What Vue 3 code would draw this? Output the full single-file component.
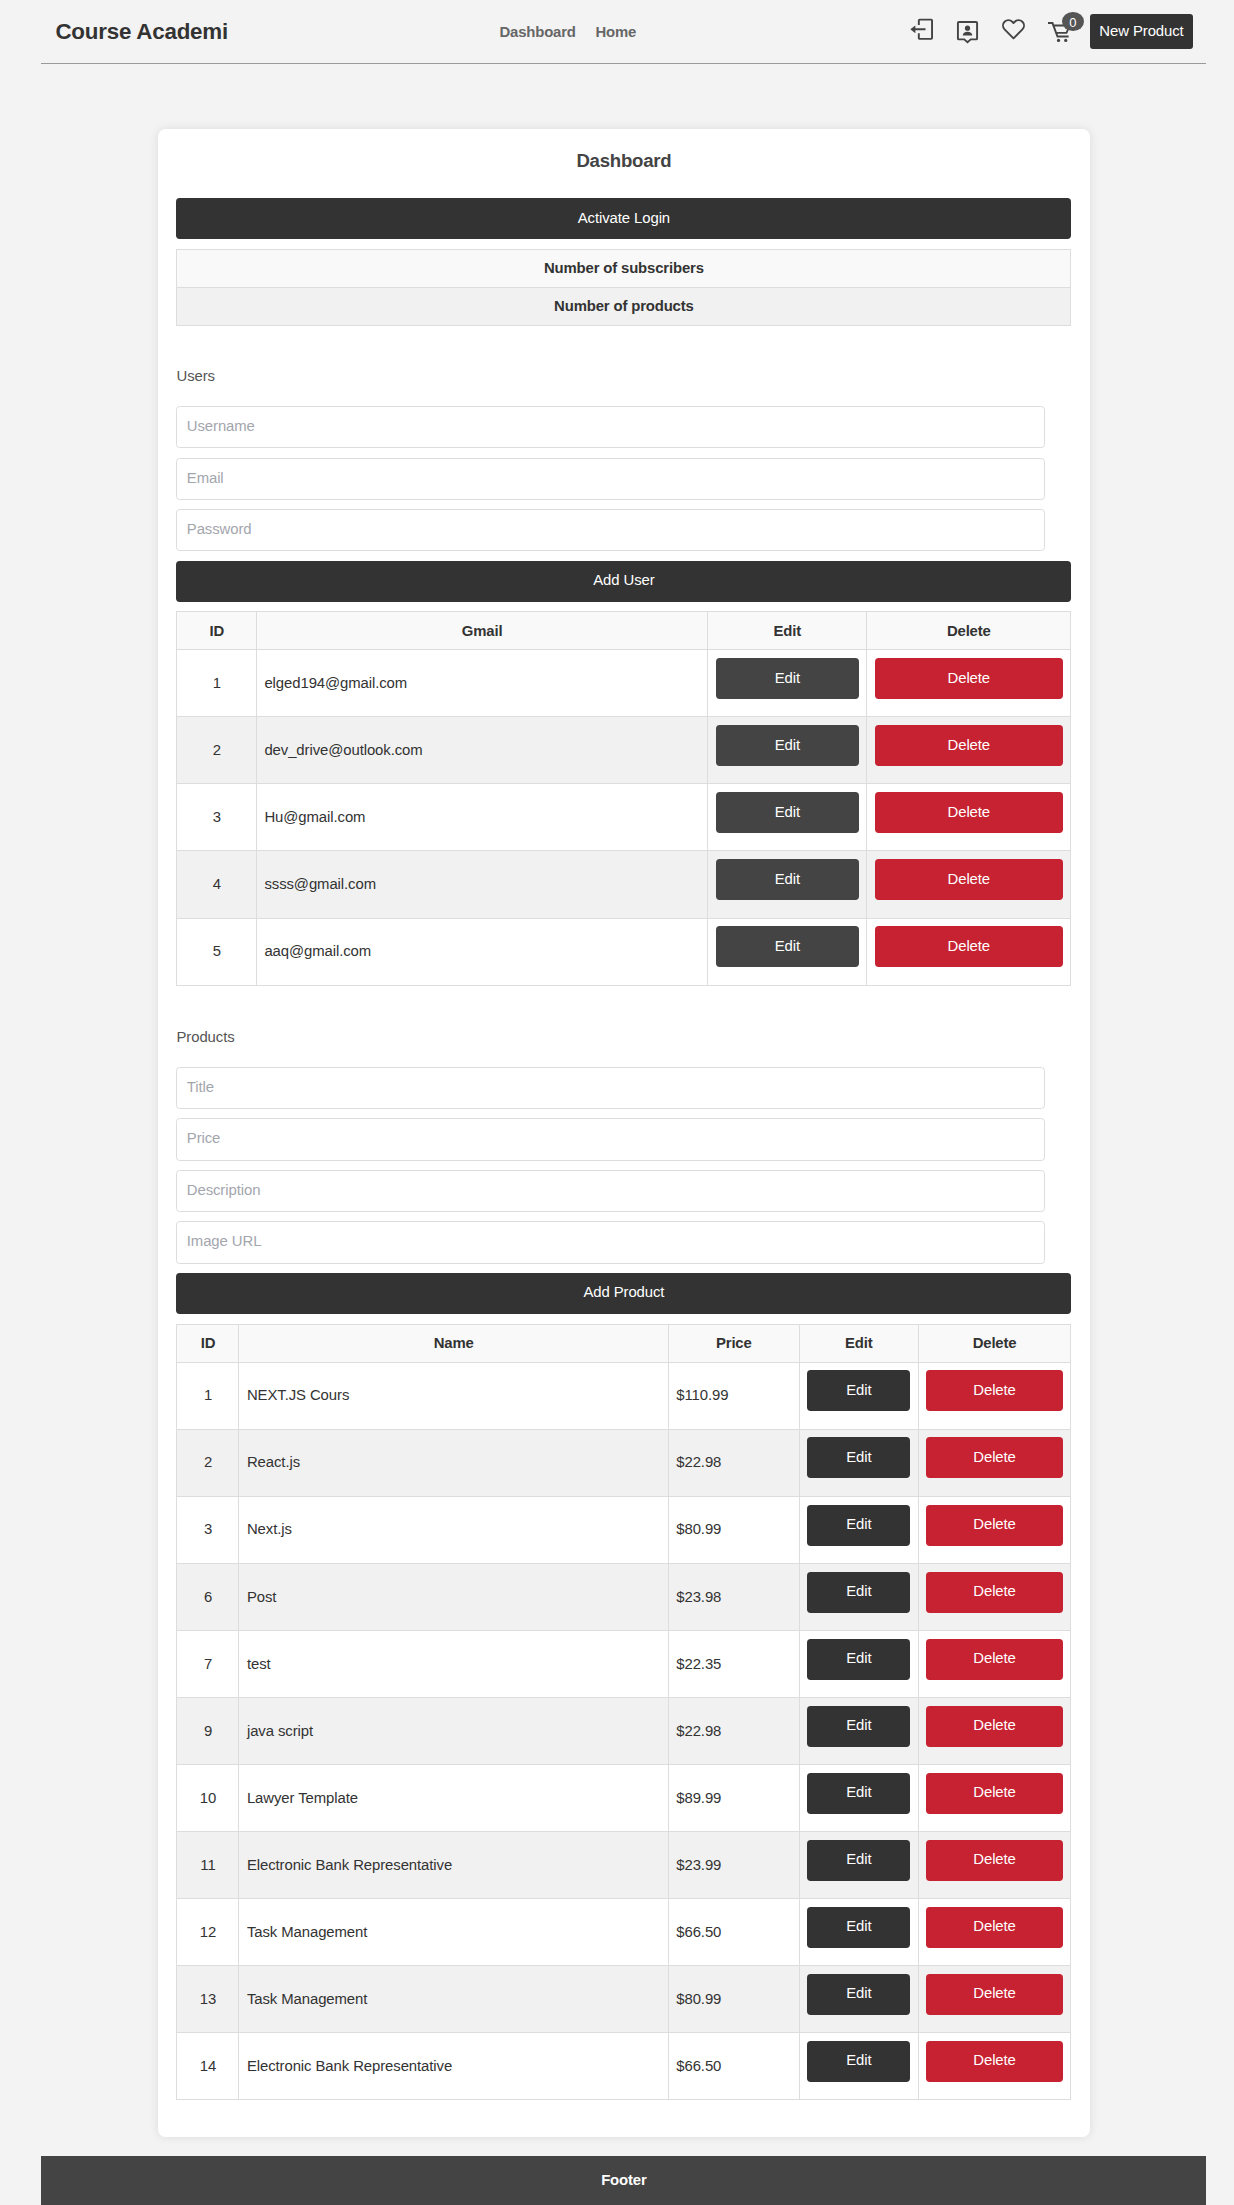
<script setup>
const userFields = ['Username', 'Email', 'Password']
const users = [
  { id: 1, email: 'elged194@gmail.com' },
  { id: 2, email: 'dev_drive@outlook.com' },
  { id: 3, email: 'Hu@gmail.com' },
  { id: 4, email: 'ssss@gmail.com' },
  { id: 5, email: 'aaq@gmail.com' },
]
const productFields = ['Title', 'Price', 'Description', 'Image URL']
const products = [
  { id: 1, name: 'NEXT.JS Cours', price: '$110.99' },
  { id: 2, name: 'React.js', price: '$22.98' },
  { id: 3, name: 'Next.js', price: '$80.99' },
  { id: 6, name: 'Post', price: '$23.98' },
  { id: 7, name: 'test', price: '$22.35' },
  { id: 9, name: 'java script', price: '$22.98' },
  { id: 10, name: 'Lawyer Template', price: '$89.99' },
  { id: 11, name: 'Electronic Bank Representative', price: '$23.99' },
  { id: 12, name: 'Task Management', price: '$66.50' },
  { id: 13, name: 'Task Management', price: '$80.99' },
  { id: 14, name: 'Electronic Bank Representative', price: '$66.50' },
]
</script>

<template>
  <div class="page">
    <header class="header">
      <h1 class="logo">Course Academi</h1>
      <nav class="nav">
        <a>Dashboard</a>
        <a>Home</a>
      </nav>
      <div class="actions">
        <svg class="icon exit" viewBox="0 0 24 24" fill="none" stroke="#444" stroke-width="2">
          <path d="M9.2 7.4V2.600a.9.9 0 0 1 .9-.9h12a.9.9 0 0 1 .9.9v18.300a.9.9 0 0 1-.9.9h-12a.9.9 0 0 1-.9-.9V16M4 11.800h12.200" />
          <path d="M.3 11.800 5.600 7.800v8z" fill="#444" stroke="none" />
        </svg>
        <svg class="icon contact" viewBox="0 0 24 24" fill="none" stroke="#444" stroke-width="2">
          <path d="M3 2h18a1 1 0 0 1 1 1v16.200a1 1 0 0 1-1 1h-5.600L12 23.200l-3.400-3H3a1 1 0 0 1-1-1V3a1 1 0 0 1 1-1z" />
          <circle cx="12" cy="8.500" r="2.700" fill="#444" stroke="none" />
          <path d="M7 16.200c0-2.600 2.200-4 5-4s5 1.400 5 4z" fill="#444" stroke="none" />
        </svg>
        <svg class="icon heart" viewBox="0 0 24 24" fill="none" stroke="#444" stroke-width="2">
          <path d="M12 21.200 2.700 11.900C.5 9.600.5 6.100 2.700 3.900c2.300-2.300 5.800-2.300 8 0L12 5.200l1.300-1.300c2.200-2.300 5.700-2.300 8 0 2.200 2.200 2.200 5.700 0 8z" stroke-linejoin="round" />
        </svg>
        <span class="cart">
          <svg class="icon" viewBox="0 0 24 24" fill="none" stroke="#444" stroke-width="2">
            <path d="M0 3.200h4.700l5.200 14h11.600M5.700 5.800h17l-3.400 7.600H8.700" />
            <circle cx="11" cy="21.300" r="1.700" fill="#444" stroke="none" />
            <circle cx="18.500" cy="21.300" r="1.700" fill="#444" stroke="none" />
          </svg>
          <span class="badge">0</span>
        </span>
        <button class="new-product">New Product</button>
      </div>
    </header>

    <main class="card">
      <h2 class="title">Dashboard</h2>
      <button class="btn">Activate Login</button>
      <table class="table summary">
        <tbody>
          <tr><th>Number of subscribers</th></tr>
          <tr><th>Number of products</th></tr>
        </tbody>
      </table>

      <p class="section users">Users</p>
      <input v-for="f in userFields" :key="f" class="field" :placeholder="f" />
      <button class="btn">Add User</button>
      <table class="table">
        <colgroup>
          <col style="width: 79.500px" /><col /><col style="width: 159px" /><col style="width: 204px" />
        </colgroup>
        <thead>
          <tr><th>ID</th><th>Gmail</th><th>Edit</th><th>Delete</th></tr>
        </thead>
        <tbody>
          <tr v-for="u in users" :key="u.id">
            <td class="id">{{ u.id }}</td>
            <td>{{ u.email }}</td>
            <td class="act"><button class="btn soft">Edit</button></td>
            <td class="act"><button class="btn danger">Delete</button></td>
          </tr>
        </tbody>
      </table>

      <p class="section">Products</p>
      <input v-for="f in productFields" :key="f" class="field" :placeholder="f" />
      <button class="btn">Add Product</button>
      <table class="table">
        <colgroup>
          <col style="width: 62px" /><col /><col style="width: 131px" /><col style="width: 119px" /><col style="width: 152.500px" />
        </colgroup>
        <thead>
          <tr><th>ID</th><th>Name</th><th>Price</th><th>Edit</th><th>Delete</th></tr>
        </thead>
        <tbody>
          <tr v-for="p in products" :key="p.id">
            <td class="id">{{ p.id }}</td>
            <td>{{ p.name }}</td>
            <td>{{ p.price }}</td>
            <td class="act"><button class="btn">Edit</button></td>
            <td class="act"><button class="btn danger">Delete</button></td>
          </tr>
        </tbody>
      </table>
    </main>

    <footer class="footer">Footer</footer>
  </div>
</template>

<style>
body {
  background: #f3f3f3;
}
</style>

<style scoped>
.page {
  box-sizing: border-box;
  width: 1165px;
  height: 2205px;
  margin-left: 41.4px;
  display: flex;
  flex-direction: column;
  font-family: "Liberation Sans", Arial, sans-serif;
  font-size: 14.9px;
  line-height: 22.35px;
  letter-spacing: -0.085px;
  color: #333;
}
.header {
  box-sizing: border-box;
  height: 64.4px;
  flex: none;
  padding: 0 13.4px 0 14px;
  border-bottom: 1px solid #999;
  display: grid;
  grid-template-columns: 444px 1fr auto;
  align-items: center;
}
.logo {
  margin: 0;
  font-size: 22.36px;
  line-height: 30px;
  letter-spacing: -0.22px;
}
.nav {
  display: flex;
  gap: 19.6px;
  font-weight: 700;
  letter-spacing: -0.15px;
  color: #666;
}
.actions {
  display: flex;
  align-items: center;
}
.icon {
  display: block;
  width: 23px;
  height: 23px;
  overflow: visible;
}
.exit {
  margin: 0 23px 4px 0;
}
.contact {
  margin-right: 23px;
}
.heart {
  margin: 0 23px 4px 0;
}
.cart {
  position: relative;
  margin-right: 19.4px;
}
.badge {
  position: absolute;
  left: 14.5px;
  top: -8.5px;
  width: 21.5px;
  height: 19px;
  border-radius: 50%;
  background: #555;
  color: #fff;
  font-size: 13px;
  line-height: 21px;
  text-align: center;
}
.new-product {
  width: 103px;
  height: 35px;
  padding: 0 0 1px;
  border: 0;
  border-radius: 3px;
  background: #333;
  color: #fff;
  font: inherit;
  letter-spacing: inherit;
}
.card {
  box-sizing: border-box;
  width: 932px;
  height: 2008.2px;
  flex: none;
  margin: 64.4px auto 18.6px;
  padding: 18.6px;
  border-radius: 7.45px;
  background: #fff;
  box-shadow: 0 0 9.3px rgba(0, 0, 0, 0.1);
}
.title {
  margin: 0 0 23px;
  font-size: 18.63px;
  line-height: 28px;
  letter-spacing: -0.25px;
  text-align: center;
  color: #444;
}
.btn {
  display: block;
  box-sizing: border-box;
  width: 100%;
  height: 41px;
  margin: 0 0 9.7px;
  padding: 0 0 2px;
  border: 0;
  border-radius: 3.7px;
  background: #333;
  color: #fff;
  font: inherit;
  letter-spacing: inherit;
}
.btn.soft {
  background: #444;
}
.btn.danger {
  background: #c72231;
}
.field {
  display: block;
  box-sizing: border-box;
  width: 869px;
  height: 42.2px;
  margin: 0 0 9.3px;
  padding: 0 9.3px 2px;
  border: 1px solid #ddd;
  border-radius: 3.7px;
  font: inherit;
  letter-spacing: inherit;
}
.field::placeholder {
  color: #a3a6ad;
  opacity: 1;
}
.section {
  margin: 0;
  padding: 40px 0 19px;
  color: #555;
}
.section.users {
  padding: 39.2px 0 18.6px;
}
.table {
  width: 100%;
  table-layout: fixed;
  border-collapse: collapse;
}
.table th,
.table td {
  box-sizing: border-box;
  border: 1px solid #ddd;
  padding: 0 7.45px;
}
.table th {
  height: 38px;
  background: #f9f9f9;
  letter-spacing: -0.15px;
  text-align: center;
}
.table td {
  height: 67.06px;
  text-align: left;
}
.table tbody tr:nth-child(even) > * {
  background: #f1f1f1;
}
.table td.id {
  text-align: center;
}
.table .act .btn {
  margin-bottom: 9.3px;
}
.footer {
  flex: 1;
  background: #444;
  color: #fff;
  font-weight: 700;
  letter-spacing: -0.15px;
  line-height: 48px;
  text-align: center;
}
</style>
